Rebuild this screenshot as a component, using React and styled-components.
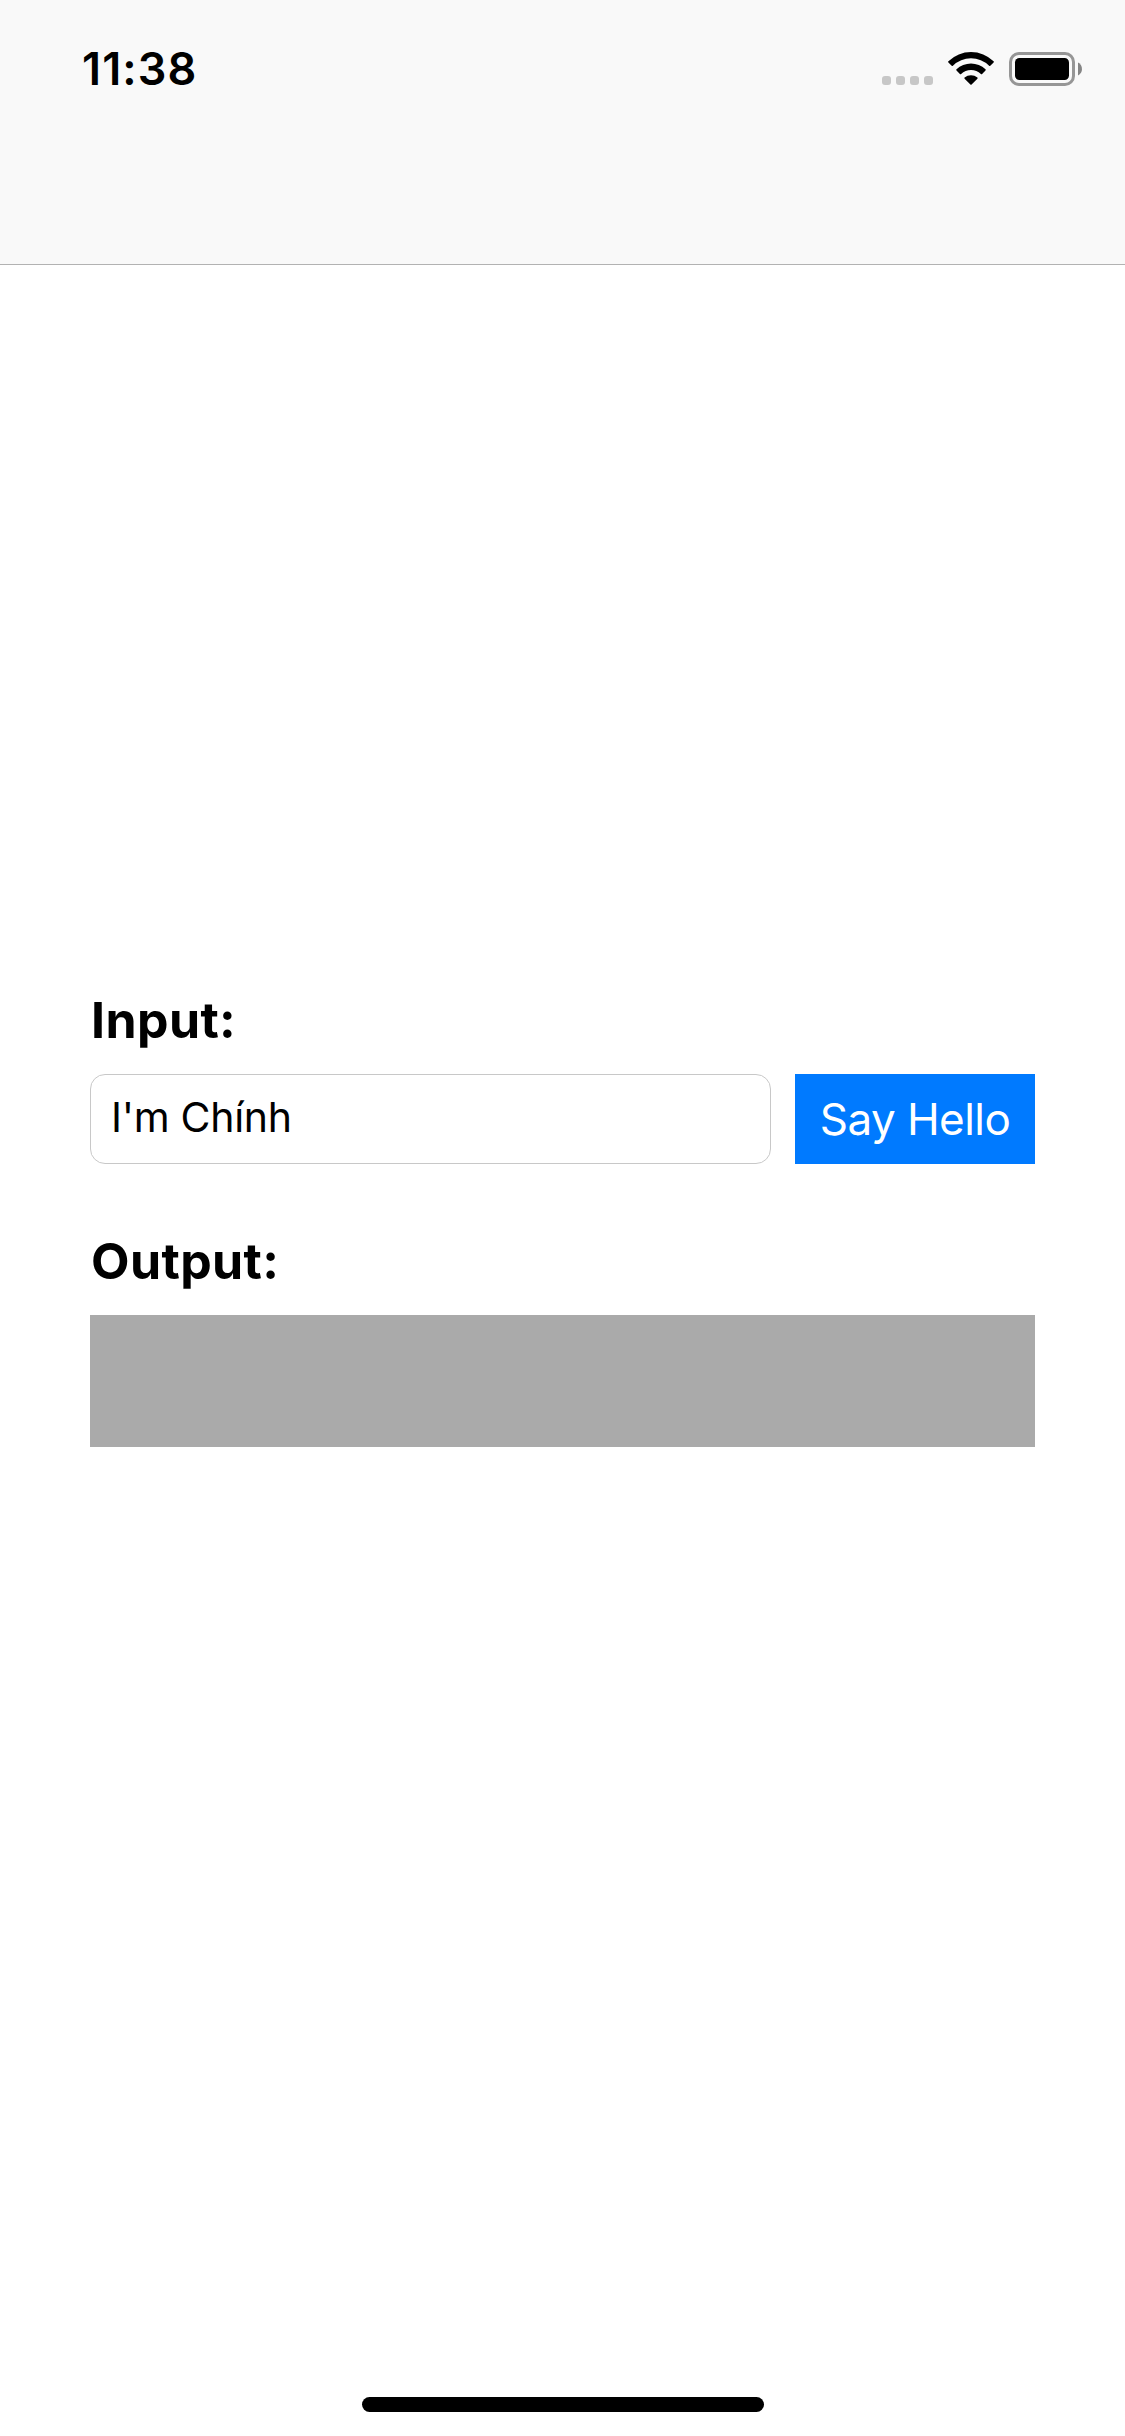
import React from "react";
import styled, { createGlobalStyle } from "styled-components";

const GlobalStyle = createGlobalStyle`
  * { box-sizing: border-box; }
  body {
    margin: 0;
    background: #fff;
    color: #000;
    font-family: Inter, "Liberation Sans", sans-serif;
  }
`;

const Screen = styled.div`
  display: flex;
  flex-direction: column;
  width: 1125px;
  height: 2436px;
  background: #fff;
`;

const NavigationBar = styled.header`
  height: 265px;
  background: #f9f9f9;
  border-bottom: 1px solid #b2b2b2;
`;

const StatusBar = styled.div`
  display: flex;
  justify-content: space-between;
  padding: 42px 43px 0 82px;
`;

const Clock = styled.time`
  font-size: 45px;
  line-height: 54px;
  font-weight: 600;
  letter-spacing: 1.1px;
`;

const StatusIcons = styled.div`
  display: flex;
  padding-top: 10px;
`;

const SignalIcon = styled.svg`
  width: 51px;
  height: 9px;
  margin-top: 24px;
`;

const WifiIcon = styled.svg`
  width: 46px;
  height: 33px;
  margin-left: 15px;
`;

const BatteryIcon = styled.svg`
  width: 73px;
  height: 34px;
  margin-left: 15px;
`;

const Form = styled.main`
  display: flex;
  flex: 1;
  flex-direction: column;
  padding: 725px 90px 0;
`;

const Label = styled.label`
  margin-top: ${({ $spaceAbove }) => $spaceAbove || 0}px;
  margin-bottom: 24px;
  padding-left: 1px;
  font-size: 50px;
  line-height: 60px;
  font-weight: 700;
  letter-spacing: 0.4px;
`;

const InputRow = styled.div`
  display: flex;
  gap: 24px;
  height: 90px;
`;

const TextField = styled.input`
  flex: 1;
  min-width: 0;
  padding: 0 20px 4px;
  border: 1px solid #c8c8c8;
  border-radius: 15px;
  outline: none;
  background: #fff;
  color: #000;
  font: 400 41px/50px Inter, "Liberation Sans", sans-serif;
  letter-spacing: -0.3px;
`;

const Button = styled.button`
  width: 240px;
  padding: 0;
  border: 0;
  background: #007aff;
  color: #fff;
  font: 400 44px/54px Inter, "Liberation Sans", sans-serif;
  letter-spacing: -0.55px;
  white-space: nowrap;
`;

const OutputBox = styled.output`
  display: block;
  height: 132px;
  background: #aaa;
`;

const HomeIndicator = styled.div`
  align-self: center;
  width: 402px;
  height: 15px;
  margin: 0 0 24px 1px;
  border-radius: 8px;
  background: #000;
`;

export default function App() {
  return (
    <Screen>
      <GlobalStyle />
      <NavigationBar>
        <StatusBar>
          <Clock>11:38</Clock>
          <StatusIcons>
            <SignalIcon viewBox="0 0 51 9" aria-hidden="true">
              {[0, 14, 28, 42].map((x) => (
                <rect key={x} x={x} width="9" height="9" rx="3" fill="#c7c7c7" />
              ))}
            </SignalIcon>
            <WifiIcon viewBox="0 0 46 33" aria-hidden="true">
              <path d="M.4 9.2a32.5 32.5 0 0 1 45.2 0q.6.6 0 1.2l-3.3 3.3q-.6.6-1.2 0a26 26 0 0 0-36.2 0q-.6.6-1.2 0L.4 10.4q-.6-.6 0-1.2Z" />
              <path d="M8.5 17.3a21 21 0 0 1 29 0q.6.6 0 1.2l-3.4 3.4q-.6.5-1.2 0a14.5 14.5 0 0 0-19.8 0q-.6.5-1.2 0l-3.4-3.4q-.6-.6 0-1.2Z" />
              <path d="M16.6 25.6a9.8 9.8 0 0 1 12.8 0q.6.5 0 1.1l-5.8 5.7q-.6.6-1.2 0l-5.8-5.7q-.6-.6 0-1.1Z" />
            </WifiIcon>
            <BatteryIcon viewBox="0 0 73 34" aria-hidden="true">
              <rect x="1.5" y="1.5" width="63" height="31" rx="8.5" fill="none" stroke="#969696" strokeWidth="3" />
              <rect x="6" y="6" width="54" height="22" rx="4.5" />
              <path d="M69 10.5c5.3 2.3 5.3 10.7 0 13Z" fill="#858585" />
            </BatteryIcon>
          </StatusIcons>
        </StatusBar>
      </NavigationBar>
      <Form>
        <Label htmlFor="message">Input:</Label>
        <InputRow>
          <TextField id="message" defaultValue="I'm Chính" />
          <Button type="button">Say Hello</Button>
        </InputRow>
        <Label htmlFor="result" $spaceAbove={67}>Output:</Label>
        <OutputBox id="result" />
      </Form>
      <HomeIndicator />
    </Screen>
  );
}
